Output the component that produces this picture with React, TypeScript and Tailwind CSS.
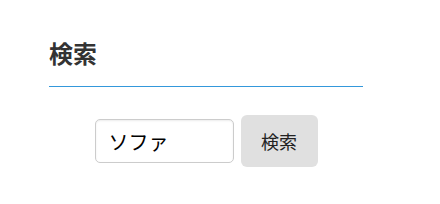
import * as React from 'react';

export default function App() {
  const [query, setQuery] = React.useState('ソファ');

  return (
    <div className="w-[440px] h-[204px] bg-white font-['Noto_Sans_CJK_JP',sans-serif]">
      <div className="ml-[49px] w-[314px] pt-[41px]">
        <h2 className="text-[24px] leading-[24px] font-bold text-[#333333] pb-[21px] border-b border-[#3498db]">
          検索
        </h2>

        <form
          className="mt-[28px] flex items-center justify-center gap-[7px]"
          onSubmit={(e) => e.preventDefault()}
        >
          <input
            value={query}
            onChange={(e) => setQuery(e.target.value)}
            className="w-[139px] h-[44px] px-[13px] text-[20px] text-black border border-[#cccccc] rounded-[5px] shadow-[inset_0_1px_2px_rgba(0,0,0,0.08)] outline-none font-['Noto_Sans_CJK_JP',sans-serif]"
          />
          <button
            type="submit"
            className="w-[77px] h-[52px] bg-[#e0e0e0] rounded-[6px] text-[18px] text-[#222222] font-['Noto_Sans_CJK_JP',sans-serif]"
          >
            検索
          </button>
        </form>
      </div>
    </div>
  );
}
